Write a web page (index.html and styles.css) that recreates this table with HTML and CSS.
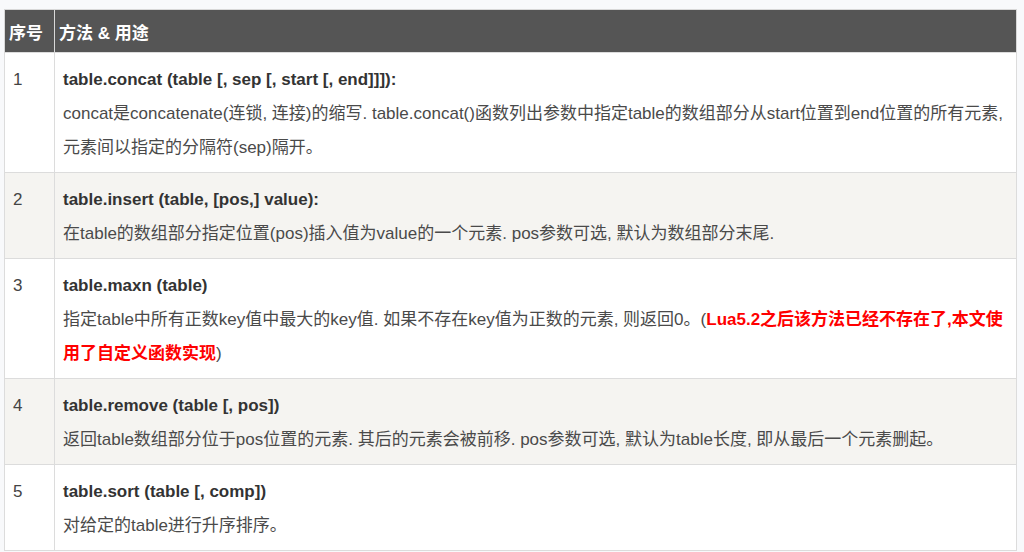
FILE: index.html
```html
<!DOCTYPE html>
<html lang="zh-CN">
<head>
<meta charset="utf-8">
<title>table 方法</title>
<link rel="stylesheet" href="styles.css">
</head>
<body>
<table class="ref">
  <thead>
    <tr><th class="col-no">序号</th><th class="col-desc">方法 &amp; 用途</th></tr>
  </thead>
  <tbody>
    <tr>
      <td class="num">1</td>
      <td class="desc"><p class="sig">table.concat (table [, sep [, start [, end]]]):</p><p class="text">concat是concatenate(连锁, 连接)的缩写. table.concat()函数列出参数中指定table的数组部分从start位置到end位置的所有元素, 元素间以指定的分隔符(sep)隔开。</p></td>
    </tr>
    <tr class="alt">
      <td class="num">2</td>
      <td class="desc"><p class="sig">table.insert (table, [pos,] value):</p><p class="text">在table的数组部分指定位置(pos)插入值为value的一个元素. pos参数可选, 默认为数组部分末尾.</p></td>
    </tr>
    <tr>
      <td class="num">3</td>
      <td class="desc"><p class="sig">table.maxn (table)</p><p class="text">指定table中所有正数key值中最大的key值. 如果不存在key值为正数的元素, 则返回0。(<span class="warn">Lua5.2之后该方法已经不存在了,本文使用了自定义函数实现</span>)</p></td>
    </tr>
    <tr class="alt">
      <td class="num">4</td>
      <td class="desc"><p class="sig">table.remove (table [, pos])</p><p class="text">返回table数组部分位于pos位置的元素. 其后的元素会被前移. pos参数可选, 默认为table长度, 即从最后一个元素删起。</p></td>
    </tr>
    <tr>
      <td class="num">5</td>
      <td class="desc"><p class="sig">table.sort (table [, comp])</p><p class="text">对给定的table进行升序排序。</p></td>
    </tr>
  </tbody>
</table>
</body>
</html>
```

FILE: styles.css
```css
html, body {
  margin: 0;
  background: #f8f9fb;
}
body {
  padding: 9px 0 0 4px;
  font-family: "Liberation Sans", "Noto Sans CJK SC", sans-serif;
  font-size: 17px;
  color: #333;
}
.ref {
  width: 1013px;
  border-collapse: collapse;
  background: #fff;
  border: 1px solid #d8d8d8;
}
.ref th {
  background: #555;
  color: #fff;
  font-weight: bold;
  text-align: left;
  height: 43px;
  padding: 0 4px;
  box-sizing: border-box;
  border: 1px solid #d8d8d8;
  border-top: none;
  border-bottom: none;
}
.ref .col-no { width: 50px; }
.ref td {
  border: 1px solid #dcdcdc;
  vertical-align: top;
}
.ref tr.alt td { background: #f5f4f1; }
.num {
  padding: 10px 8px 7px 8px;
  line-height: 34px;
  color: #444;
}
.desc {
  padding: 10px 8px 7px 8px;
}
.sig {
  margin: 0;
  font-weight: bold;
  line-height: 34px;
  color: #333;
}
.text {
  margin: 0;
  line-height: 34px;
  color: #4a4a4a;
}
.warn {
  color: #ff0000;
  font-weight: bold;
}
```
